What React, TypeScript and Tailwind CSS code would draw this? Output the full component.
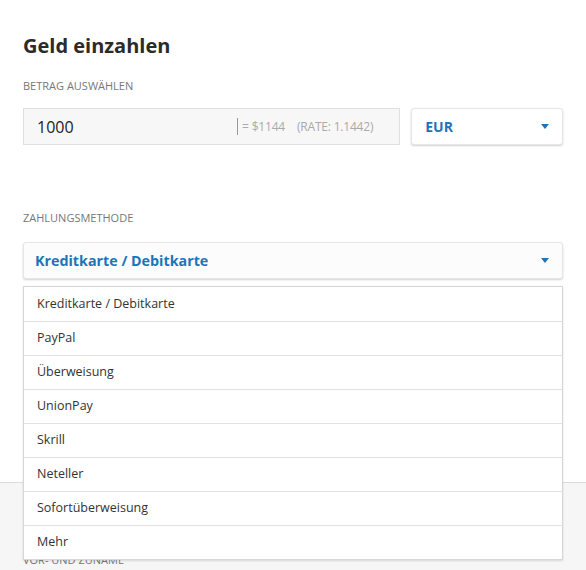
import { useState } from 'react';

const METHODS = [
  'Kreditkarte / Debitkarte',
  'PayPal',
  'Überweisung',
  'UnionPay',
  'Skrill',
  'Neteller',
  'Sofortüberweisung',
  'Mehr',
];

function Caret() {
  return (
    <svg width="8" height="5" viewBox="0 0 8 5" className="shrink-0">
      <path d="M0 0h8L4 5z" fill="#1b75bb" />
    </svg>
  );
}

export default function App() {
  const [amount] = useState('1000');
  const [method] = useState(METHODS[0]);
  const [open] = useState(true);

  const rate = 1.1442;
  const usd = Math.round(Number(amount) * rate);

  return (
    <div className="min-h-[570px] bg-white text-[#333] overflow-hidden" style={{ fontFamily: '"Open Sans", "Liberation Sans", sans-serif' }}>
      <div className="px-[23px] pt-[33px] h-[482px]">
        <h1 className="text-[20px] font-bold leading-[26px] text-[#2b2b2b]">Geld einzahlen</h1>

        <div className="mt-[20px] text-[11px] leading-[14px] uppercase text-[#777]">Betrag auswählen</div>
        <div className="mt-[15px] flex gap-[11px]">
          <div className="w-[378px] h-[37px] flex items-center bg-[#f7f7f7] border border-[#e0e0e0] pl-[13px] pr-[26px]">
            <div className="flex-1 text-[16px] text-[#222]">{amount}</div>
            <div className="flex items-center text-[12px] text-[#aaa] tracking-[-0.2px]">
              <span className="w-px h-[17px] bg-[#999] mr-[4px]" />
              <span>= ${usd}</span>
              <span className="ml-[12px]">(RATE: {rate})</span>
            </div>
          </div>
          <div className="w-[152px] h-[37px] flex items-center justify-between bg-white border border-[#e6e6e6] rounded-[3px] shadow-[0_1px_2px_rgba(0,0,0,0.18)] pl-[13px] pr-[13px]">
            <span className="text-[14px] font-bold text-[#1b75bb]">EUR</span>
            <Caret />
          </div>
        </div>

        <div className="mt-[66px] text-[11px] leading-[14px] uppercase text-[#777]">Zahlungsmethode</div>
        <div className="relative mt-[17px] w-[540px]">
          <div className="h-[37px] flex items-center justify-between bg-[#fcfcfc] border border-[#e6e6e6] rounded-[3px] shadow-[0_1px_2px_rgba(0,0,0,0.18)] pl-[11px] pr-[13px]">
            <span className="text-[14.3px] font-bold text-[#1b75bb]">{method}</span>
            <Caret />
          </div>
          {open ? (
            <ul className="absolute z-10 left-0 top-[44px] w-[540px] bg-white border border-[#d6d6d6] shadow-[0_1px_2px_rgba(0,0,0,0.12)]">
              {METHODS.map((m, i) => (
                <li
                  key={m}
                  className={`h-[34px] flex items-center pl-[13px] text-[12.5px] text-[#333] ${i > 0 ? 'border-t border-[#e2e2e2]' : ''}`}
                >
                  {m}
                </li>
              ))}
            </ul>
          ) : null}
        </div>
      </div>

      <div className="h-[88px] bg-[#f6f6f6] border-t border-[#dcdcdc] px-[23px] pt-[70px]">
        <div className="text-[11px] leading-[14px] uppercase text-[#777]">Vor- und Zuname</div>
      </div>
    </div>
  );
}
